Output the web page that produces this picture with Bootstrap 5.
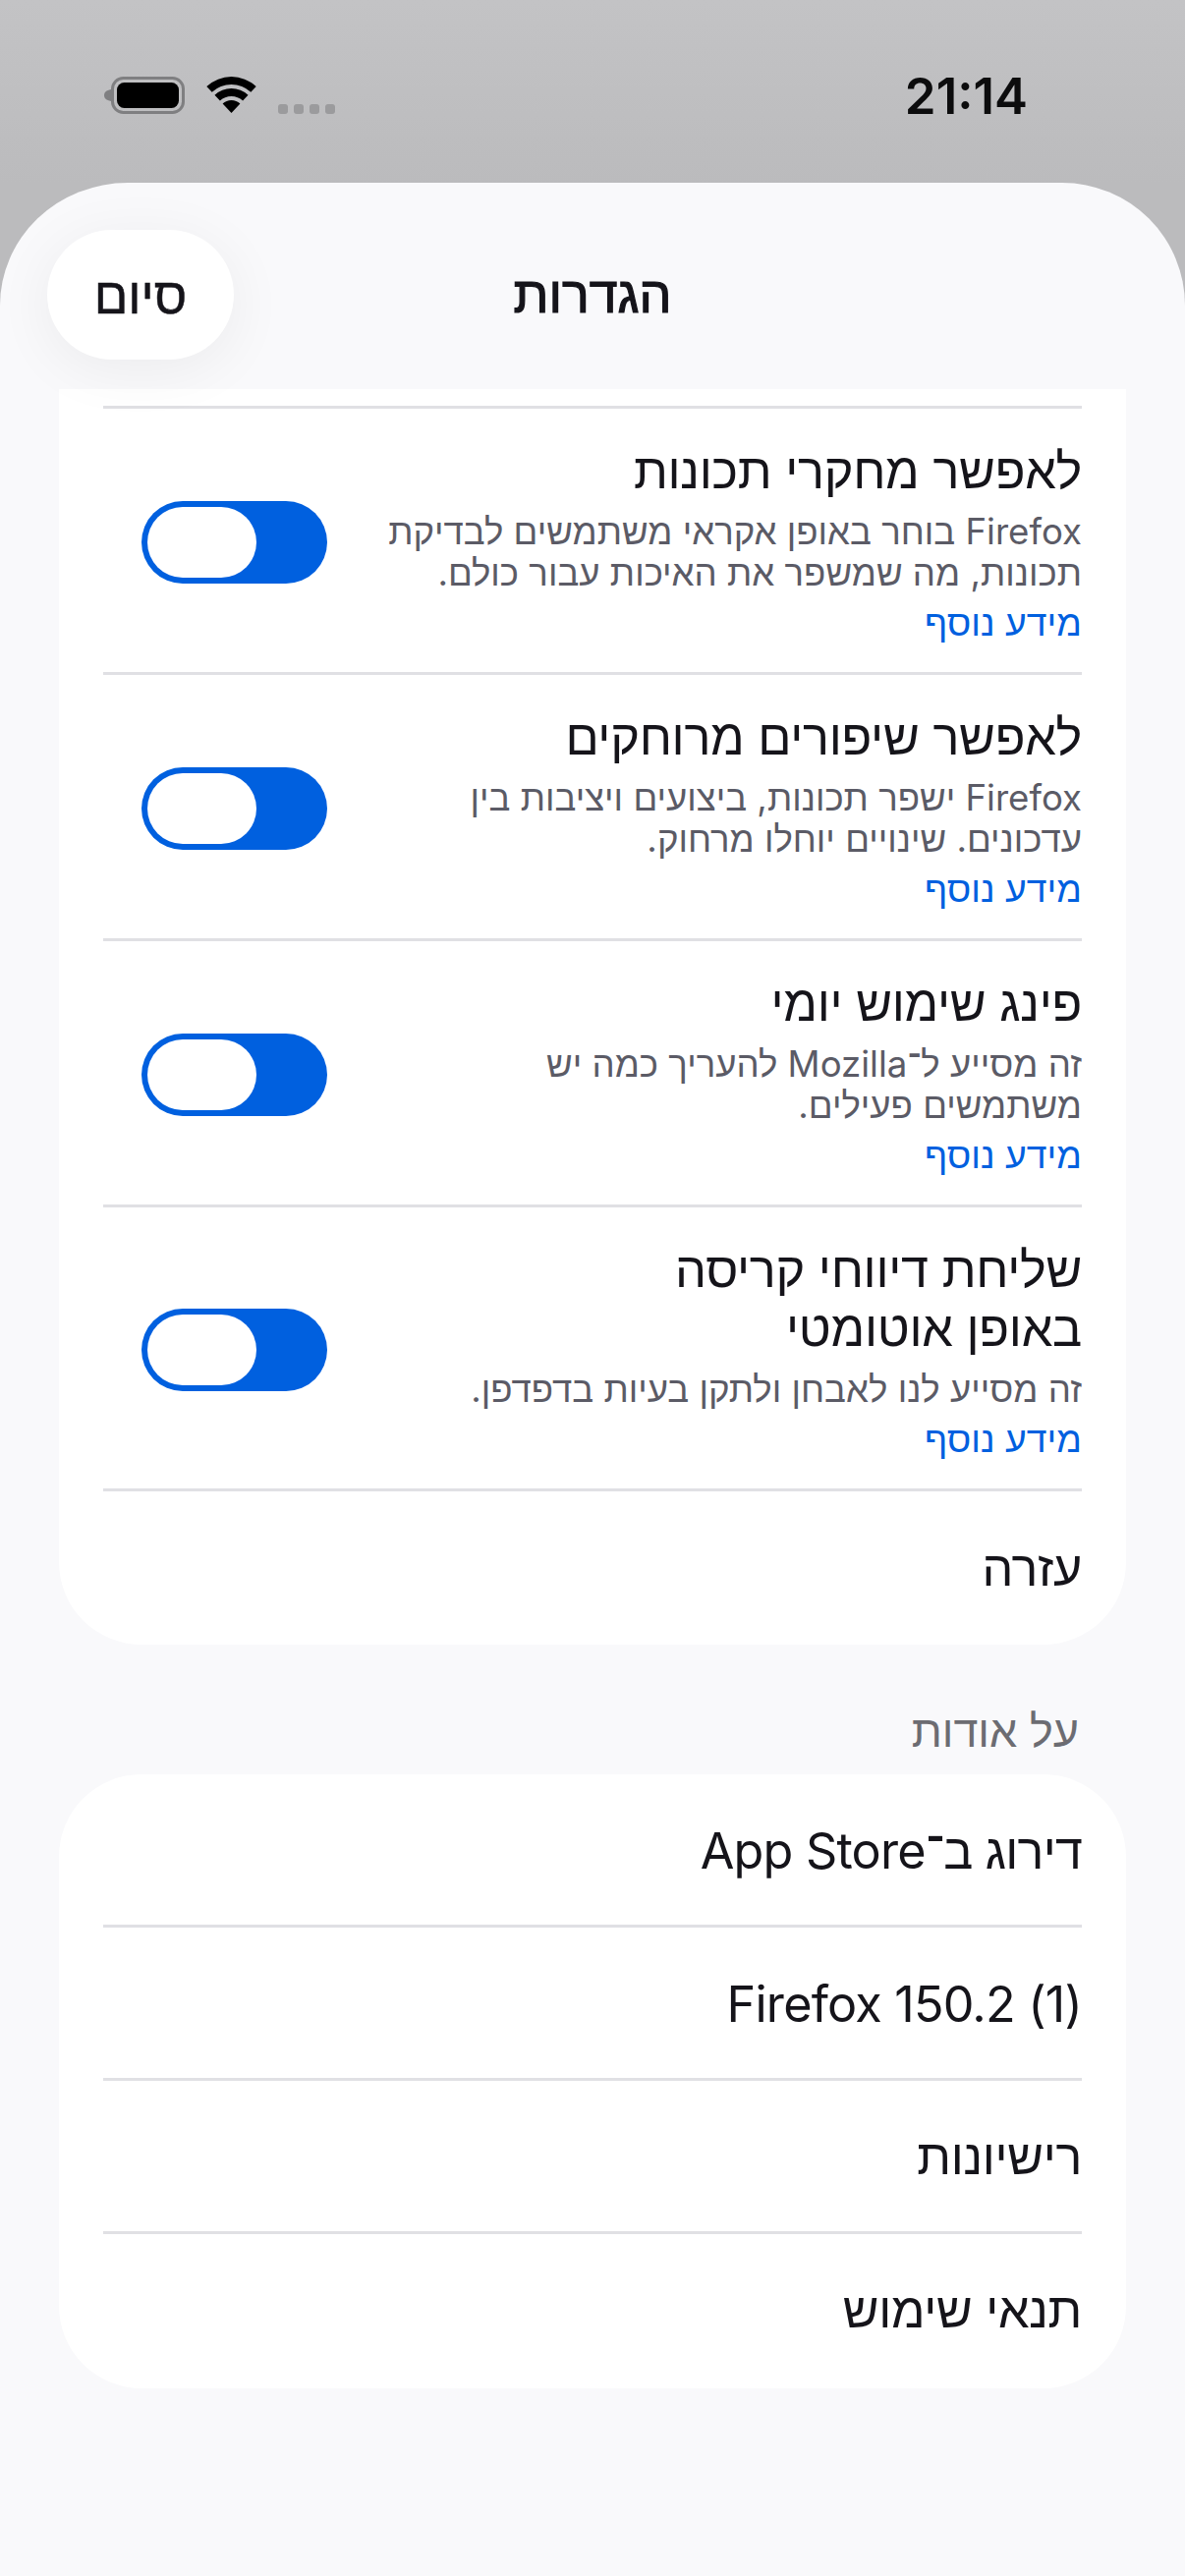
<!DOCTYPE html>
<html lang="he" dir="rtl">
<head>
  <meta charset="UTF-8" />
  <meta name="viewport" content="width=device-width, initial-scale=1.0" />
  <title>הגדרות</title>
  <link href="https://cdn.jsdelivr.net/npm/bootstrap@5.3.3/dist/css/bootstrap.min.css" rel="stylesheet" />
  <style>
    html, body { height: 100%; }
    body {
      background: linear-gradient(to bottom, #c3c3c5, #bbbbbd 186px);
      font-family: Inter, "Liberation Sans", sans-serif;
      color: #15141a;
      overflow: hidden;
    }
    .status-strip { height: 186px; padding: 78px 160px 0 106px; }
    .clock { font-size: 51px; font-weight: 600; line-height: 40px; color: #0c0c0d; }
    .batt { width: 82px; height: 38px; }
    .wifi { width: 51px; height: 38px; }
    .dot-row { gap: 6px; height: 38px; }
    .dot-row i { width: 10px; height: 10px; border-radius: 3px; background: #9b9b9d; }
    .sheet {
      height: 2436px;
      background: #f9f9fb;
      border-radius: 130px 125px 0 0 / 125px;
      overflow: hidden;
    }
    .sheet-head {
      position: relative;
      z-index: 1;
      height: 210px;
      padding: 48px 48px 0;
      display: grid;
      grid-template-columns: 1fr auto 1fr;
      align-items: start;
    }
    .sheet-title { font-size: 52px; -webkit-text-stroke: 1.2px #15141a; line-height: 132px; }
    .done-btn {
      justify-self: end;
      width: 190px;
      height: 132px;
      border: 0;
      border-radius: 66px;
      background: #fff;
      color: #15141a;
      font-size: 51px;
      -webkit-text-stroke: .5px #15141a;
      line-height: 1;
      padding: 0;
      box-shadow: 0 10px 60px rgba(0, 0, 0, .06);
    }
    .group-box {
      margin: 0 60px;
      background: #fff;
      padding: 0 45px;
      border-radius: 84px;
    }
    .group-box.cut-top { border-radius: 0 0 84px 84px; padding-top: 17px; }
    .set-row { border-top: 3px solid #e0e0e4; }
    .set-row.first { border-top: 0; }
    .plain-row { height: 156px; font-size: 50.3px; letter-spacing: -.3px; line-height: 153px; }
    .plain-row.first { height: 153px; }
    .plain-row.tall { height: 159px; line-height: 156px; }
    .plain-row.latin { letter-spacing: -.8px; line-height: 156px; }
    .opt-row { padding: 33px 0 29px; }
    .opt-title { font-size: 50.5px; letter-spacing: -.3px; line-height: 60px; margin-bottom: 11px; }
    .opt-desc { font-size: 36.6px; line-height: 42px; color: #5b5b66; }
    .opt-link { display: block; font-size: 37.4px; line-height: 42px; margin-top: 9px; color: #0060df; text-decoration: none; }
    .opt-text { width: 710px; }
    .switch-track {
      width: 189px;
      height: 84px;
      margin-left: 39px;
      padding: 6px;
      border-radius: 42px;
      background: #0060df;
    }
    .switch-knob { width: 111px; height: 72px; border-radius: 36px; background: #fff; }
    .group-label { margin: 0 60px; padding: 63px 48px 20px; font-size: 45px; line-height: 49px; color: #6c6c72; }
  </style>
</head>
<body>
  <div class="status-strip d-flex justify-content-between align-items-start">
    <div class="clock">21:14</div>
    <div class="d-flex align-items-center" dir="ltr" style="gap:22px">
      <svg class="batt" viewBox="0 0 82 38">
        <path d="M7 13 C2 14 0 16 0 19 C0 22 2 24 7 25 Z" fill="#7f7f81"/>
        <rect x="8.5" y="1.5" width="72" height="35" rx="11" fill="none" stroke="#7f7f81" stroke-width="3"/>
        <rect x="13" y="6" width="63" height="26" rx="7.5" fill="#000"/>
      </svg>
      <svg class="wifi" viewBox="0 0 51 38">
        <path d="M.3 10A37 37 0 0 1 50.7 10L45.3 15.8A29 29 0 0 0 5.7 15.8Z" fill="#000"/>
        <path d="M8.45 18.7A25 25 0 0 1 42.55 18.7L37.1 24.6A17 17 0 0 0 13.9 24.6Z" fill="#000"/>
        <path d="M16.6 27.5A13 13 0 0 1 34.4 27.5L25.5 37Z" fill="#000"/>
      </svg>
      <div class="d-flex align-items-end dot-row"><i></i><i></i><i></i><i></i></div>
    </div>
  </div>

  <div class="sheet">
    <div class="sheet-head">
      <span></span>
      <div class="sheet-title">הגדרות</div>
      <button class="done-btn" type="button">סיום</button>
    </div>

    <div class="group-box cut-top">
      <div class="set-row opt-row d-flex justify-content-between align-items-center">
        <div class="opt-text">
          <div class="opt-title">לאפשר מחקרי תכונות</div>
          <div class="opt-desc">Firefox בוחר באופן אקראי משתמשים לבדיקת תכונות, מה שמשפר את האיכות עבור כולם.</div>
          <a class="opt-link" href="#">מידע נוסף</a>
        </div>
        <div class="switch-track d-flex justify-content-end" role="switch" aria-checked="true"><div class="switch-knob"></div></div>
      </div>
      <div class="set-row opt-row d-flex justify-content-between align-items-center">
        <div class="opt-text">
          <div class="opt-title">לאפשר שיפורים מרוחקים</div>
          <div class="opt-desc">Firefox ישפר תכונות, ביצועים ויציבות בין עדכונים. שינויים יוחלו מרחוק.</div>
          <a class="opt-link" href="#">מידע נוסף</a>
        </div>
        <div class="switch-track d-flex justify-content-end" role="switch" aria-checked="true"><div class="switch-knob"></div></div>
      </div>
      <div class="set-row opt-row d-flex justify-content-between align-items-center">
        <div class="opt-text">
          <div class="opt-title">פינג שימוש יומי</div>
          <div class="opt-desc">זה מסייע ל־Mozilla להעריך כמה יש משתמשים פעילים.</div>
          <a class="opt-link" href="#">מידע נוסף</a>
        </div>
        <div class="switch-track d-flex justify-content-end" role="switch" aria-checked="true"><div class="switch-knob"></div></div>
      </div>
      <div class="set-row opt-row d-flex justify-content-between align-items-center">
        <div class="opt-text">
          <div class="opt-title">שליחת דיווחי קריסה<br>באופן אוטומטי</div>
          <div class="opt-desc">זה מסייע לנו לאבחן ולתקן בעיות בדפדפן.</div>
          <a class="opt-link" href="#">מידע נוסף</a>
        </div>
        <div class="switch-track d-flex justify-content-end" role="switch" aria-checked="true"><div class="switch-knob"></div></div>
      </div>
      <div class="set-row plain-row tall">עזרה</div>
    </div>

    <div class="group-label">על אודות</div>
    <div class="group-box pb-1">
      <div class="set-row plain-row first latin">דירוג ב־App Store</div>
      <div class="set-row plain-row latin">Firefox 150.2 (1)</div>
      <div class="set-row plain-row">רישיונות</div>
      <div class="set-row plain-row">תנאי שימוש</div>
    </div>
  </div>

  <script src="https://cdn.jsdelivr.net/npm/bootstrap@5.3.3/dist/js/bootstrap.bundle.min.js"></script>
</body>
</html>
